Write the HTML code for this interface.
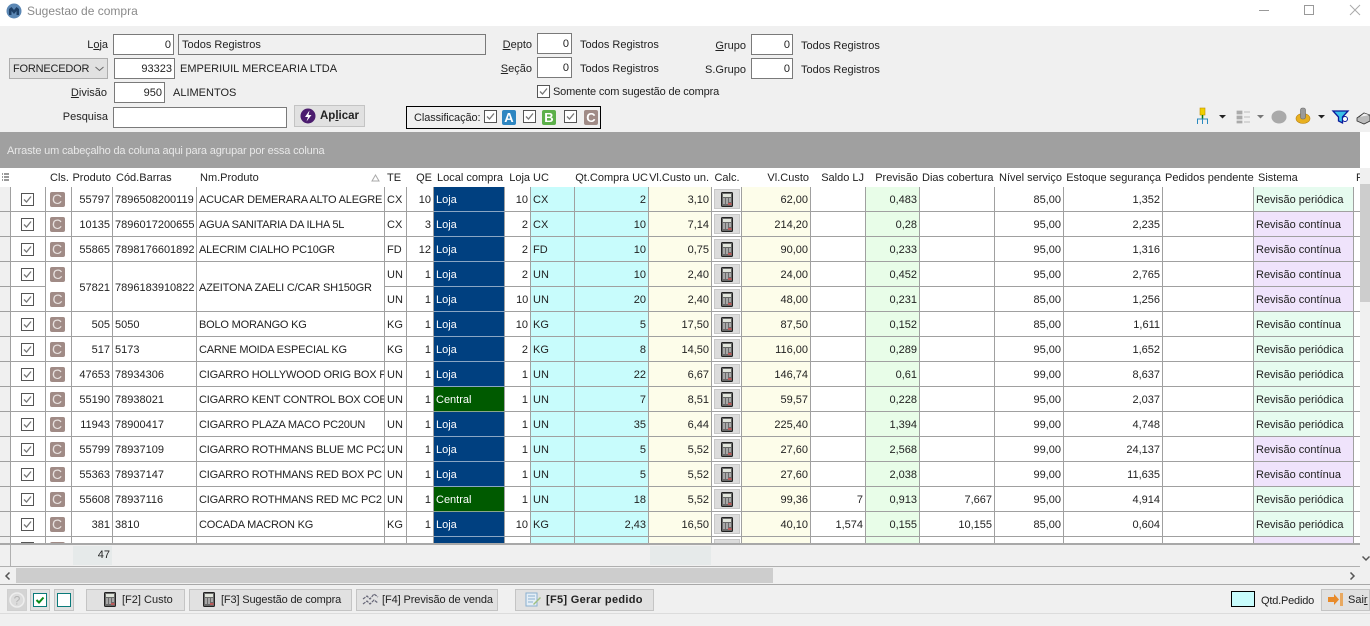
<!DOCTYPE html>
<html lang="pt"><head><meta charset="utf-8"><title>Sugestao de compra</title>
<style>
html,body{margin:0;padding:0}
body{width:1370px;height:626px;overflow:hidden;background:#f0f0f0;position:relative;font:11px "Liberation Sans",sans-serif;color:#222}
.a{position:absolute;white-space:nowrap}
.i{position:absolute;box-sizing:border-box;background:#fff;border:1px solid #7a7a7a;text-align:right;padding:3px 2px 0 0;height:21px;line-height:15px}
.l{position:absolute;white-space:nowrap;line-height:14px;margin-top:1px}
.rl{text-align:right}
.btn{position:absolute;box-sizing:border-box;background:#e1e1e1;border:1px solid #c4c4c4;height:22px;line-height:21px;white-space:nowrap}
.ck{position:absolute;width:13px;height:13px}
.bd{position:absolute;width:14px;height:15px;border-radius:2px;color:#fff;font:bold 13px/15px "Liberation Sans",sans-serif;text-align:center}
#g{position:absolute;left:0;top:168px;width:1360px;height:376px;overflow:hidden;background:#fff}
table{border-collapse:separate;border-spacing:0;table-layout:fixed;width:1361px}
th{font-weight:normal;height:19px;padding:2px 2px 0;box-sizing:border-box;overflow:hidden;white-space:nowrap;text-align:left;background:#fff;line-height:17px}
td{height:25px;box-sizing:border-box;padding:2px 2px 0;border-right:1px solid #a0a0a0;border-bottom:1px solid #a0a0a0;overflow:hidden;white-space:nowrap;line-height:22px}
td:nth-child(6){letter-spacing:-.2px}
.r{text-align:right}
.bl{background:#004080;color:#fff;border-bottom-color:#8aa6c4}
.gr{background:#005a00;color:#fff;border-bottom-color:#8aa68a}
.sp{background:#e6fbef}
.sc{background:#efe3fb}
.cb{padding:0;text-align:center;line-height:0}
.cb svg{vertical-align:middle}
.ck2{padding:0 2px 0 0}
.cl{display:inline-block;width:15px;height:15px;margin-right:3px;border-radius:2px;background:#a08b86;color:#e8e2e0;font:14px/15px "Liberation Sans",sans-serif;text-align:center;vertical-align:middle}
.ca{display:inline-block;box-sizing:border-box;width:26px;height:20px;background:#dcdcdc;border:1px solid #c8c8c8;padding-top:2px;vertical-align:middle;line-height:0}
</style></head><body>
<svg width="0" height="0" style="position:absolute">
<symbol id="c" viewBox="0 0 13 13"><rect x=".5" y=".5" width="12" height="12" fill="#fff" stroke="#555"/><path d="M3 6.500l2.500 2.500L10 3.500" fill="none" stroke="#777" stroke-width="1.300"/></symbol>
<symbol id="k" viewBox="0 0 12 15"><rect x=".5" y=".5" width="11" height="14" rx="1" fill="#6a6a6a" stroke="#222"/><rect x="2" y="2" width="8" height="3" fill="#e0e4da"/><path d="M2 7h2M5 7h2M8 7h2M2 9h2M5 9h2M8 9h2M2 11h2M5 11h2" stroke="#e6e6e6" stroke-width="1"/><path d="M7 12h3.500" stroke="#e05050" stroke-width="1.400"/></symbol>
</svg>

<!-- title bar -->
<div class="a" style="left:0;top:0;width:1370px;height:26px;background:#fff"></div>
<svg class="a" style="left:6px;top:3px" width="16" height="16" viewBox="0 0 16 16"><circle cx="8" cy="8" r="7.500" fill="#5b87b4"/><path d="M3 12V6l2.500-2L8 7l2.500-3L13 6v6h-2.500V8L8 11 5.500 8v4z" fill="#1d3f66"/></svg>
<div class="a" style="left:27px;top:3px;font-size:12px;line-height:16px;color:#8a8a8a">Sugestao de compra</div>
<svg class="a" style="left:1250px;top:0" width="120" height="22"><path d="M9 10.500h10" stroke="#999"/><rect x="54.500" y="5.500" width="9" height="9" fill="none" stroke="#999"/><path d="M100 5l10 10M110 5l-10 10" stroke="#aaa"/></svg>

<!-- form left -->
<div class="l rl" style="left:60px;width:48px;top:37px">L<u>o</u>ja</div>
<div class="i" style="left:113px;top:34px;width:61px">0</div>
<div class="i" style="left:178px;top:34px;width:308px;background:#f0f0f0;text-align:left;padding-left:3px">Todos Registros</div>
<div class="a" style="left:9px;top:58px;width:99px;height:21px;box-sizing:border-box;background:#e1e1e1;border:1px solid #adadad;padding-left:3px;line-height:20px;letter-spacing:-.2px">FORNECEDOR<svg style="position:absolute;left:85px;top:7px" width="9" height="6"><path d="M.5 1l4 3.500L8.500 1" fill="none" stroke="#666"/></svg></div>
<div class="i" style="left:114px;top:58px;width:61px">93323</div>
<div class="l" style="left:180px;top:61px">EMPERIUIL MERCEARIA LTDA</div>
<div class="l rl" style="left:60px;width:47px;top:85px"><u>D</u>ivisão</div>
<div class="i" style="left:114px;top:82px;width:51px">950</div>
<div class="l" style="left:173px;top:85px">ALIMENTOS</div>
<div class="l rl" style="left:50px;width:58px;top:109px">Pesquisa</div>
<div class="i" style="left:113px;top:107px;width:174px"></div>
<div class="btn" style="left:294px;top:105px;width:71px;font-weight:bold;font-size:11.500px;padding-left:25px">Ap<u>l</u>icar</div>
<svg class="a" style="left:300px;top:108px" width="16" height="16"><circle cx="8" cy="8" r="7.500" fill="#4b1c6e"/><path d="M9.500 2.500L5 9h3l-1.500 4.500L11.500 7H8.500z" fill="#fff"/></svg>

<!-- form middle -->
<div class="l rl" style="left:480px;width:52px;top:37px"><u>D</u>epto</div>
<div class="i" style="left:537px;top:33px;width:35px">0</div>
<div class="l" style="left:580px;top:37px">Todos Registros</div>
<div class="l rl" style="left:480px;width:52px;top:61px"><u>S</u>eção</div>
<div class="i" style="left:537px;top:57px;width:35px">0</div>
<div class="l" style="left:580px;top:61px">Todos Registros</div>
<svg class="ck" style="left:537px;top:85px"><use href="#c"/></svg>
<div class="l" style="left:553px;top:84px;letter-spacing:-.15px">Somente com sugestão de compra</div>
<div class="l rl" style="left:700px;width:46px;top:38px"><u>G</u>rupo</div>
<div class="i" style="left:751px;top:34px;width:42px">0</div>
<div class="l" style="left:801px;top:38px">Todos Registros</div>
<div class="l rl" style="left:690px;width:56px;top:62px">S.Grupo</div>
<div class="i" style="left:751px;top:58px;width:42px">0</div>
<div class="l" style="left:801px;top:62px">Todos Registros</div>

<!-- classificacao -->
<div class="a" style="left:406px;top:106px;width:195px;height:23px;box-sizing:border-box;border:1px solid #000"></div>
<div class="l" style="left:414px;top:110px;letter-spacing:-.1px">Classificação:</div>
<svg class="ck" style="left:484px;top:110px"><use href="#c"/></svg>
<div class="bd" style="left:502px;top:110px;background:#2e86c1">A</div>
<svg class="ck" style="left:523px;top:110px"><use href="#c"/></svg>
<div class="bd" style="left:542px;top:110px;background:#5cb04a">B</div>
<svg class="ck" style="left:564px;top:110px"><use href="#c"/></svg>
<div class="bd" style="left:584px;top:110px;background:#a08b86">C</div>

<!-- toolbar -->
<svg class="a" style="left:1190px;top:106px" width="180" height="20">
<rect x="10" y="2" width="5" height="7" fill="#f0d000" stroke="#c09000" stroke-width=".6"/>
<path d="M12.500 9v4" stroke="#0a7a0a" stroke-width="1.500"/>
<path d="M7.500 18v-5h10v5M12.500 13v5" fill="none" stroke="#2a8ac0"/>
<path d="M29 9h7l-3.500 3.500z" fill="#222"/>
<path d="M47 5h5v3h-5zM47 10h5v3h-5zM47 15h5v2h-5zM54 6h6M54 11h6M54 16h6" fill="#aaa" stroke="#aaa" stroke-width=".8"/>
<path d="M67 9h7l-3.500 3.500z" fill="#777"/>
<ellipse cx="89" cy="11" rx="7.500" ry="6.500" fill="#a9a9a9"/>
<path d="M106 12.500a7 5 0 0 0 14 0a7 5 0 0 0-14 0z" fill="#e8b020" stroke="#b88010" stroke-width=".6"/>
<rect x="110.500" y="2" width="5" height="11" rx="2" fill="#9a9a9a" stroke="#666" stroke-width=".6"/>
<path d="M128 9h7l-3.500 3.500z" fill="#222"/>
<path d="M143 5h15l-5.500 6v6l-4-2v-4z" fill="#39c0e8" stroke="#0a1a9a" stroke-width="1.300"/>
<circle cx="155" cy="13" r="2.500" fill="#fff" stroke="#0a1a9a"/>
<path d="M167 12l7-5 6 3v5l-6 3-7-3z" fill="#bbb" stroke="#333" stroke-width=".8"/>
<path d="M169 11l5-4 6 2" fill="#eee" stroke="#333" stroke-width=".6"/>
</svg>

<!-- group band -->
<div class="a" style="left:0;top:132px;width:1360px;height:36px;background:#a0a0a0"></div>
<div class="a" style="left:7px;top:144px;color:#e8e8e8;line-height:14px;letter-spacing:-.17px">Arraste um cabeçalho da coluna aqui para agrupar por essa coluna</div>

<!-- grid -->
<div id="g"><table>
<colgroup>
<col style="width:11px;background:#f0f0f0"><col style="width:35px"><col style="width:26px"><col style="width:41px"><col style="width:84px"><col style="width:188px"><col style="width:22px"><col style="width:27px"><col style="width:71px"><col style="width:26px"><col style="width:44px;background:#c8fcfc"><col style="width:74px;background:#c8fcfc"><col style="width:63px;background:#fdfdea"><col style="width:30px"><col style="width:69px;background:#fdfdea"><col style="width:55px"><col style="width:54px;background:#e8fde8"><col style="width:75px"><col style="width:69px"><col style="width:99px"><col style="width:91px"><col style="width:100px"><col style="width:8px">
</colgroup>
<tr><th style="padding:0 0 0 2px;line-height:0"><svg width="7" height="9"><path d="M0 1h1M0 4h1M0 7h1M2 1h5M2 4h5M2 7h5" stroke="#333"/></svg></th><th></th><th style="padding-left:4px">Cls.</th><th class="r" style="padding-right:2px;padding-left:0">Produto</th><th style="padding-left:3px">Cód.Barras</th><th style="padding-left:3px;position:relative">Nm.Produto<svg style="position:absolute;left:174px;top:6px" width="9" height="8"><path d="M4.500 1L8 7H1z" fill="none" stroke="#aaa"/></svg></th><th>TE</th><th class="r">QE</th><th style="padding-left:3px">Local compra</th><th class="r" style="padding-right:1px;padding-left:0">Loja</th><th>UC</th><th class="r" style="padding-right:1px;padding-left:0">Qt.Compra UC</th><th class="r" style="padding-right:3px;padding-left:0">Vl.Custo un.</th><th style="text-align:center;padding-left:0;padding-right:0">Calc.</th><th class="r">Vl.Custo</th><th class="r">Saldo LJ</th><th class="r">Previsão</th><th class="r">Dias cobertura</th><th class="r">Nível serviço</th><th class="r">Estoque segurança</th><th class="r">Pedidos pendente</th><th style="padding-left:4px">Sistema</th><th>P</th></tr>
<tr><td></td><td class="cb ck2"><svg width="13" height="13"><use href="#c"/></svg></td><td class="cb"><span class="cl">C</span></td><td class="r">55797</td><td>7896508200119</td><td>ACUCAR DEMERARA ALTO ALEGRE</td><td>CX</td><td class="r">10</td><td class="bl">Loja</td><td class="r">10</td><td>CX</td><td class="r">2</td><td class="r">3,10</td><td class="cb"><span class="ca"><svg width="12" height="15"><use href="#k"/></svg></span></td><td class="r">62,00</td><td></td><td class="r">0,483</td><td></td><td class="r">85,00</td><td class="r">1,352</td><td></td><td class="sp">Revisão periódica</td><td></td></tr>
<tr><td></td><td class="cb ck2"><svg width="13" height="13"><use href="#c"/></svg></td><td class="cb"><span class="cl">C</span></td><td class="r">10135</td><td>7896017200655</td><td>AGUA SANITARIA DA ILHA 5L</td><td>CX</td><td class="r">3</td><td class="bl">Loja</td><td class="r">2</td><td>CX</td><td class="r">10</td><td class="r">7,14</td><td class="cb"><span class="ca"><svg width="12" height="15"><use href="#k"/></svg></span></td><td class="r">214,20</td><td></td><td class="r">0,28</td><td></td><td class="r">95,00</td><td class="r">2,235</td><td></td><td class="sc">Revisão contínua</td><td></td></tr>
<tr><td></td><td class="cb ck2"><svg width="13" height="13"><use href="#c"/></svg></td><td class="cb"><span class="cl">C</span></td><td class="r">55865</td><td>7898176601892</td><td>ALECRIM CIALHO PC10GR</td><td>FD</td><td class="r">12</td><td class="bl">Loja</td><td class="r">2</td><td>FD</td><td class="r">10</td><td class="r">0,75</td><td class="cb"><span class="ca"><svg width="12" height="15"><use href="#k"/></svg></span></td><td class="r">90,00</td><td></td><td class="r">0,233</td><td></td><td class="r">95,00</td><td class="r">1,316</td><td></td><td class="sc">Revisão contínua</td><td></td></tr>
<tr><td></td><td class="cb ck2"><svg width="13" height="13"><use href="#c"/></svg></td><td class="cb" rowspan="2" style="vertical-align:top;padding-top:5px"><span class="cl" style="display:block;margin:0 0 10px 4px">C</span><span class="cl" style="display:block;margin:0 0 0 4px">C</span></td><td class="r" rowspan="2">57821</td><td rowspan="2">7896183910822</td><td rowspan="2">AZEITONA ZAELI C/CAR SH150GR</td><td>UN</td><td class="r">1</td><td class="bl">Loja</td><td class="r">2</td><td>UN</td><td class="r">10</td><td class="r">2,40</td><td class="cb"><span class="ca"><svg width="12" height="15"><use href="#k"/></svg></span></td><td class="r">24,00</td><td></td><td class="r">0,452</td><td></td><td class="r">95,00</td><td class="r">2,765</td><td></td><td class="sc">Revisão contínua</td><td></td></tr>
<tr><td></td><td class="cb ck2"><svg width="13" height="13"><use href="#c"/></svg></td><td>UN</td><td class="r">1</td><td class="bl">Loja</td><td class="r">10</td><td>UN</td><td class="r">20</td><td class="r">2,40</td><td class="cb"><span class="ca"><svg width="12" height="15"><use href="#k"/></svg></span></td><td class="r">48,00</td><td></td><td class="r">0,231</td><td></td><td class="r">85,00</td><td class="r">1,256</td><td></td><td class="sc">Revisão contínua</td><td></td></tr>
<tr><td></td><td class="cb ck2"><svg width="13" height="13"><use href="#c"/></svg></td><td class="cb"><span class="cl">C</span></td><td class="r">505</td><td>5050</td><td>BOLO MORANGO KG</td><td>KG</td><td class="r">1</td><td class="bl">Loja</td><td class="r">10</td><td>KG</td><td class="r">5</td><td class="r">17,50</td><td class="cb"><span class="ca"><svg width="12" height="15"><use href="#k"/></svg></span></td><td class="r">87,50</td><td></td><td class="r">0,152</td><td></td><td class="r">85,00</td><td class="r">1,611</td><td></td><td class="sp">Revisão contínua</td><td></td></tr>
<tr><td></td><td class="cb ck2"><svg width="13" height="13"><use href="#c"/></svg></td><td class="cb"><span class="cl">C</span></td><td class="r">517</td><td>5173</td><td>CARNE MOIDA ESPECIAL KG</td><td>KG</td><td class="r">1</td><td class="bl">Loja</td><td class="r">2</td><td>KG</td><td class="r">8</td><td class="r">14,50</td><td class="cb"><span class="ca"><svg width="12" height="15"><use href="#k"/></svg></span></td><td class="r">116,00</td><td></td><td class="r">0,289</td><td></td><td class="r">95,00</td><td class="r">1,652</td><td></td><td class="sp">Revisão periódica</td><td></td></tr>
<tr><td></td><td class="cb ck2"><svg width="13" height="13"><use href="#c"/></svg></td><td class="cb"><span class="cl">C</span></td><td class="r">47653</td><td>78934306</td><td>CIGARRO HOLLYWOOD ORIG BOX F</td><td>UN</td><td class="r">1</td><td class="bl">Loja</td><td class="r">1</td><td>UN</td><td class="r">22</td><td class="r">6,67</td><td class="cb"><span class="ca"><svg width="12" height="15"><use href="#k"/></svg></span></td><td class="r">146,74</td><td></td><td class="r">0,61</td><td></td><td class="r">99,00</td><td class="r">8,637</td><td></td><td class="sp">Revisão periódica</td><td></td></tr>
<tr><td></td><td class="cb ck2"><svg width="13" height="13"><use href="#c"/></svg></td><td class="cb"><span class="cl">C</span></td><td class="r">55190</td><td>78938021</td><td>CIGARRO KENT CONTROL BOX COE</td><td>UN</td><td class="r">1</td><td class="gr">Central</td><td class="r">1</td><td>UN</td><td class="r">7</td><td class="r">8,51</td><td class="cb"><span class="ca"><svg width="12" height="15"><use href="#k"/></svg></span></td><td class="r">59,57</td><td></td><td class="r">0,228</td><td></td><td class="r">95,00</td><td class="r">2,037</td><td></td><td class="sp">Revisão periódica</td><td></td></tr>
<tr><td></td><td class="cb ck2"><svg width="13" height="13"><use href="#c"/></svg></td><td class="cb"><span class="cl">C</span></td><td class="r">11943</td><td>78900417</td><td>CIGARRO PLAZA MACO PC20UN</td><td>UN</td><td class="r">1</td><td class="bl">Loja</td><td class="r">1</td><td>UN</td><td class="r">35</td><td class="r">6,44</td><td class="cb"><span class="ca"><svg width="12" height="15"><use href="#k"/></svg></span></td><td class="r">225,40</td><td></td><td class="r">1,394</td><td></td><td class="r">99,00</td><td class="r">4,748</td><td></td><td class="sp">Revisão periódica</td><td></td></tr>
<tr><td></td><td class="cb ck2"><svg width="13" height="13"><use href="#c"/></svg></td><td class="cb"><span class="cl">C</span></td><td class="r">55799</td><td>78937109</td><td>CIGARRO ROTHMANS BLUE MC PC2</td><td>UN</td><td class="r">1</td><td class="bl">Loja</td><td class="r">1</td><td>UN</td><td class="r">5</td><td class="r">5,52</td><td class="cb"><span class="ca"><svg width="12" height="15"><use href="#k"/></svg></span></td><td class="r">27,60</td><td></td><td class="r">2,568</td><td></td><td class="r">99,00</td><td class="r">24,137</td><td></td><td class="sc">Revisão contínua</td><td></td></tr>
<tr><td></td><td class="cb ck2"><svg width="13" height="13"><use href="#c"/></svg></td><td class="cb"><span class="cl">C</span></td><td class="r">55363</td><td>78937147</td><td>CIGARRO ROTHMANS RED BOX PC</td><td>UN</td><td class="r">1</td><td class="bl">Loja</td><td class="r">1</td><td>UN</td><td class="r">5</td><td class="r">5,52</td><td class="cb"><span class="ca"><svg width="12" height="15"><use href="#k"/></svg></span></td><td class="r">27,60</td><td></td><td class="r">2,038</td><td></td><td class="r">99,00</td><td class="r">11,635</td><td></td><td class="sc">Revisão contínua</td><td></td></tr>
<tr><td></td><td class="cb ck2"><svg width="13" height="13"><use href="#c"/></svg></td><td class="cb"><span class="cl">C</span></td><td class="r">55608</td><td>78937116</td><td>CIGARRO ROTHMANS RED MC PC2</td><td>UN</td><td class="r">1</td><td class="gr">Central</td><td class="r">1</td><td>UN</td><td class="r">18</td><td class="r">5,52</td><td class="cb"><span class="ca"><svg width="12" height="15"><use href="#k"/></svg></span></td><td class="r">99,36</td><td class="r">7</td><td class="r">0,913</td><td class="r">7,667</td><td class="r">95,00</td><td class="r">4,914</td><td></td><td class="sp">Revisão periódica</td><td></td></tr>
<tr><td></td><td class="cb ck2"><svg width="13" height="13"><use href="#c"/></svg></td><td class="cb"><span class="cl">C</span></td><td class="r">381</td><td>3810</td><td>COCADA MACRON KG</td><td>KG</td><td class="r">1</td><td class="bl">Loja</td><td class="r">10</td><td>KG</td><td class="r">2,43</td><td class="r">16,50</td><td class="cb"><span class="ca"><svg width="12" height="15"><use href="#k"/></svg></span></td><td class="r">40,10</td><td class="r">1,574</td><td class="r">0,155</td><td class="r">10,155</td><td class="r">85,00</td><td class="r">0,604</td><td></td><td class="sp">Revisão periódica</td><td></td></tr>
<tr><td></td><td class="cb ck2" style="vertical-align:top;padding-top:5px"><svg width="13" height="13"><use href="#c"/></svg></td><td class="cb" style="vertical-align:top;padding-top:5px"><span class="cl"></span></td><td></td><td></td><td></td><td></td><td></td><td class="bl"></td><td></td><td></td><td></td><td></td><td class="cb" style="vertical-align:top;padding-top:2px"><span class="ca"></span></td><td></td><td></td><td></td><td></td><td></td><td></td><td></td><td class="sc"></td><td></td></tr>
</table></div>

<!-- vertical scrollbar -->
<div class="a" style="left:1360px;top:132px;width:10px;height:36px;background:#fff"></div>
<div class="a" style="left:1360px;top:168px;width:10px;height:398px;background:#f0f0f0"></div>
<div class="a" style="left:1360px;top:184px;width:10px;height:118px;background:#cdcdcd"></div>
<svg class="a" style="left:1362px;top:555px" width="8" height="7"><path d="M.5 1.500L4 5l3.500-3.500" fill="none" stroke="#555" stroke-width="1.500"/></svg>

<!-- footer -->
<div class="a" style="left:0;top:543px;width:1360px;height:2px;background:#a8a8a8"></div>
<div class="a" style="left:0;top:545px;width:1360px;height:21px;background:#f0f0f0"></div>
<div class="a" style="left:10px;top:545px;width:1px;height:21px;background:#b0b0b0"></div>
<div class="a" style="left:73px;top:546px;width:39px;height:19px;box-sizing:border-box;background:#e6eaea;text-align:right;padding-right:2px;line-height:19px">47</div>
<div class="a" style="left:650px;top:546px;width:61px;height:19px;background:#e6eaea"></div>

<!-- horizontal scrollbar -->
<div class="a" style="left:0;top:566px;width:1360px;height:1px;background:#b0b0b0"></div>
<div class="a" style="left:0;top:584px;width:1370px;height:1px;background:#a8a8a8"></div>
<div class="a" style="left:16px;top:568px;width:757px;height:15px;background:#cdcdcd"></div>
<svg class="a" style="left:4px;top:572px" width="7" height="8"><path d="M5.500.5L2 4l3.500 3.500" fill="none" stroke="#555" stroke-width="1.500"/></svg>
<svg class="a" style="left:1349px;top:572px" width="7" height="8"><path d="M1.500.5L5 4 1.500 7.500" fill="none" stroke="#555" stroke-width="1.500"/></svg>

<!-- bottom bar -->
<div class="a" style="left:0;top:613px;width:1370px;height:1px;background:#dcdcdc"></div>
<div class="btn" style="left:7px;top:589px;width:20px;height:22px;background:#d4d4d4;border-color:#d0d0d0"></div>
<svg class="a" style="left:9px;top:591px" width="16" height="18"><circle cx="8" cy="9" r="7" fill="#dcdcdc" stroke="#eee" stroke-width="1.500"/><text x="8" y="13.500" font-size="12" font-family="Liberation Sans" fill="#b4b4b4" text-anchor="middle">?</text></svg>
<div class="btn" style="left:30px;top:589px;width:20px"></div>
<svg class="a" style="left:33px;top:593px" width="14" height="14"><rect x=".5" y=".5" width="13" height="13" fill="#fff" stroke="#0a7a7a"/><path d="M3.500 7l2.500 2.500L10.500 4.500" fill="none" stroke="#0a8a1a" stroke-width="2"/></svg>
<div class="btn" style="left:54px;top:589px;width:20px"></div>
<svg class="a" style="left:57px;top:593px" width="14" height="14"><rect x=".5" y=".5" width="13" height="13" fill="#fff" stroke="#0a7a7a"/></svg>
<div class="btn" style="left:86px;top:589px;width:99px;padding-left:35px">[F2] Custo</div>
<svg class="a" style="left:104px;top:592px" width="12" height="15"><use href="#k"/></svg>
<div class="btn" style="left:189px;top:589px;width:163px;padding-left:31px;letter-spacing:-.15px">[F3] Sugestão de compra</div>
<svg class="a" style="left:203px;top:592px" width="12" height="15"><use href="#k"/></svg>
<div class="btn" style="left:356px;top:589px;width:142px;padding-left:25px;letter-spacing:-.1px">[F4] Previsão de venda</div>
<svg class="a" style="left:362px;top:592px" width="17" height="15"><path d="M1 7l4-3 3 3 4-5 4 3M1 12l4-3 3 3 4-4 4 3" fill="none" stroke="#667" stroke-width="1.200" stroke-dasharray="3 1"/></svg>
<div class="btn" style="left:515px;top:589px;width:139px;padding-left:30px;font-weight:bold;letter-spacing:.3px">[F5] Gerar pedido</div>
<svg class="a" style="left:525px;top:592px" width="17" height="15"><rect x="1" y="1" width="11" height="13" fill="#e4eef6" stroke="#8ab0d0"/><path d="M3 4h7M3 7h7M3 10h5" stroke="#8ab0d0"/><path d="M8 12l7-7 1 1-7 7z" fill="#a0c080"/></svg>
<div class="a" style="left:1231px;top:591px;width:24px;height:16px;box-sizing:border-box;background:#c8fcfc;border:1px solid #000"></div>
<div class="l" style="left:1261px;top:593px;letter-spacing:-.2px">Qtd.Pedido</div>
<div class="btn" style="left:1321px;top:589px;width:49px;padding-left:26px">Sai<u>r</u></div>
<svg class="a" style="left:1328px;top:592px" width="16" height="15"><path d="M0 5h6V2l5 5.500-5 5.500v-3H0z" fill="#e88a2a"/><rect x="12" y="1" width="3" height="13" fill="#e8a860"/></svg>
</body></html>
